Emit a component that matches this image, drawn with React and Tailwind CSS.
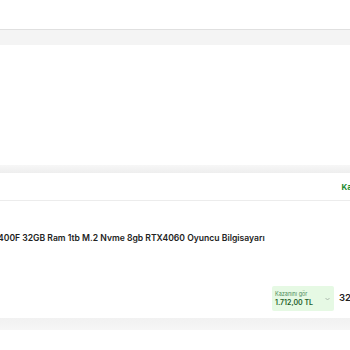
import React from "react";

function App() {
    return (
        <div className="w-[350px] h-[350px] overflow-hidden bg-white" style={{fontFamily: "Inter, 'Liberation Sans', sans-serif"}}>
            <div className="h-[29px] bg-white"/>
            <div className="h-[16px] bg-[#f4f4f4] border-t border-[#e0e0e0]"/>
            <div className="h-[120px] bg-white"/>
            <div className="h-[8px] bg-gradient-to-b from-[#f7f7f7] to-[#eeeeee]"/>
            <div className="h-[28px] bg-white border-b border-[#ececec] flex items-center justify-end overflow-hidden">
                <span className="text-[8px] font-bold text-[#1a8a2e] whitespace-nowrap -mr-[2px]">Ka</span>
            </div>
            <div className="h-[117px] bg-white relative overflow-hidden">
                <div className="pt-[32px] -ml-[2px] whitespace-nowrap text-[8.6px] leading-[10px] font-semibold text-[#222]">
                    400F 32GB Ram 1tb M.2 Nvme 8gb RTX4060 Oyuncu Bilgisayarı
                </div>
                <div className="flex items-center justify-end mt-[43px] gap-[5px]">
                    <div className="w-[62px] h-[25px] bg-[#e6f9e4] rounded-[2px] flex items-center pl-[3px] pr-[4px]">
                        <div className="flex flex-col flex-1">
                            <span className="text-[5.5px] leading-[8px] text-[#4a8a55]">Kazanını gör</span>
                            <span className="text-[7px] leading-[9px] font-semibold text-[#1f5f2a]">1.712,00 TL</span>
                        </div>
                        <svg width="5" height="4" viewBox="0 0 10 6">
                            <path d="M1 1l4 4 4-4" fill="none" stroke="#9aa59c" strokeWidth="1.5"/>
                        </svg>
                    </div>
                    <span className="text-[9.5px] font-semibold text-[#222] whitespace-nowrap -mr-[1px]">32</span>
                </div>
            </div>
            <div className="h-[12px] bg-gradient-to-b from-[#f1f1f1] to-[#f6f6f6]"/>
            <div className="h-[20px] bg-white"/>
        </div>
    );
}

export default App;
